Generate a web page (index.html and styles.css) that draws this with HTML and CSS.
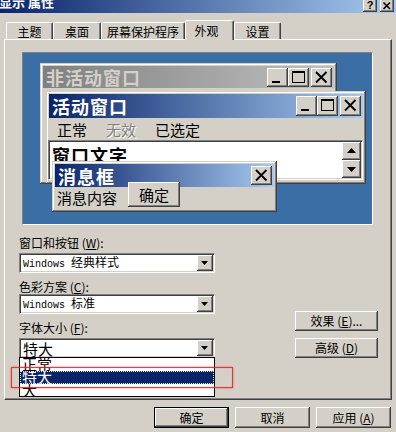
FILE: index.html
```html
<!DOCTYPE html>
<html lang="zh">
<head>
<meta charset="utf-8">
<link rel="stylesheet" href="styles.css">
</head>
<body>
<div class="dialog">
  <div class="titlebar">
    <span class="title-text">显示 属性</span>
    <div class="title-btns">
      <span class="tbtn">?</span>
      <span class="tbtn"><svg width="14" height="12" viewBox="0 0 14 12"><path d="M3.5 2.5 L10 9 M10 2.5 L3.5 9" stroke="#000" stroke-width="1.6"/></svg></span>
    </div>
  </div>

  <div class="tabs">
    <div class="tab t1">主题</div>
    <div class="tab t2">桌面</div>
    <div class="tab t3">屏幕保护程序</div>
    <div class="tab t4 sel">外观</div>
    <div class="tab t5">设置</div>
  </div>

  <div class="panel">
    <div class="preview">
      <div class="win inactive">
        <div class="wtitle">
          <span>非活动窗口</span>
          <div class="cbtns">
            <span class="cbtn"><svg width="21" height="19" viewBox="0 0 21 19"><rect x="5" y="13" width="8" height="2"/></svg></span>
            <span class="cbtn"><svg width="21" height="19" viewBox="0 0 21 19"><path fill-rule="evenodd" d="M4 3h13v12H4z M5 5h11v9H5z"/></svg></span>
            <span class="cbtn cx"><svg width="21" height="19" viewBox="0 0 21 19"><path d="M5 4 L15.5 14.5 M15.5 4 L5 14.5" stroke="#000" stroke-width="1.8"/></svg></span>
          </div>
        </div>
      </div>

      <div class="win active">
        <div class="wtitle">
          <span>活动窗口</span>
          <div class="cbtns">
            <span class="cbtn"><svg width="21" height="19" viewBox="0 0 21 19"><rect x="5" y="13" width="8" height="2"/></svg></span>
            <span class="cbtn"><svg width="21" height="19" viewBox="0 0 21 19"><path fill-rule="evenodd" d="M4 3h13v12H4z M5 5h11v9H5z"/></svg></span>
            <span class="cbtn cx"><svg width="21" height="19" viewBox="0 0 21 19"><path d="M5 4 L15.5 14.5 M15.5 4 L5 14.5" stroke="#000" stroke-width="1.8"/></svg></span>
          </div>
        </div>
        <div class="menu">
          <span>正常</span>
          <span class="disabled">无效</span>
          <span>已选定</span>
        </div>
        <div class="textarea">
          <span class="wtext">窗口文字</span>
          <div class="scroll">
            <span class="sbtn"><svg width="19" height="18" viewBox="0 0 19 18"><path d="M5 11h9l-4.5-5z"/></svg></span>
            <span class="sbtn"><svg width="19" height="18" viewBox="0 0 19 18"><path d="M5 7h9l-4.5 5z"/></svg></span>
          </div>
        </div>
      </div>

      <div class="win msg">
        <div class="wtitle">
          <span>消息框</span>
          <div class="cbtns">
            <span class="cbtn cx"><svg width="21" height="19" viewBox="0 0 21 19"><path d="M5 4 L15.5 14.5 M15.5 4 L5 14.5" stroke="#000" stroke-width="1.8"/></svg></span>
          </div>
        </div>
        <div class="msgbody">
          <span class="msgtext">消息内容</span>
          <span class="okbtn">确定</span>
        </div>
      </div>
    </div>

    <div class="lower">
      <div class="left-col">
        <div class="label l1">窗口和按钮 (<u>W</u>):</div>
        <div class="combo c1"><span class="ctext"><span class="lat">Windows </span>经典样式</span><span class="arrow"><svg width="16" height="16" viewBox="0 0 16 16"><path d="M4 6h7l-3.5 4z"/></svg></span></div>
        <div class="label l2">色彩方案 (<u>C</u>):</div>
        <div class="combo c2"><span class="ctext"><span class="lat">Windows </span>标准</span><span class="arrow"><svg width="16" height="16" viewBox="0 0 16 16"><path d="M4 6h7l-3.5 4z"/></svg></span></div>
        <div class="label l3">字体大小 (<u>F</u>):</div>
        <div class="combo c3">
          <span class="ctext big">特大</span><span class="arrow"><svg width="16" height="16" viewBox="0 0 16 16"><path d="M4 6h7l-3.5 4z"/></svg></span>
          <div class="droplist">
            <div class="item">正常</div>
            <div class="item selitem">特大</div>
            <div class="item">大</div>
          </div>
          <div class="redmark"></div>
        </div>
      </div>
      <div class="right-col">
        <span class="btn wide">效果 (<u>E</u>)...</span>
        <span class="btn wide">高级 (<u>D</u>)</span>
      </div>
    </div>
  </div>

  <div class="footer">
    <span class="btn foot default">确定</span>
    <span class="btn foot">取消</span>
    <span class="btn foot">应用 (<u>A</u>)</span>
  </div>
</div>
</body>
</html>
```

FILE: styles.css
```css
* { box-sizing: border-box; }
html, body { margin: 0; padding: 0; }
body {
  width: 396px;
  height: 432px;
  overflow: hidden;
  background: #d4d0c8;
  font-family: "Noto Sans CJK SC", "Liberation Sans", sans-serif;
  font-size: 12px;
  color: #000;
}
.dialog { width: 396px; height: 432px; }

/* title bar */
.titlebar {
  height: 13px;
  background: linear-gradient(to right, #0a246a, #a6caf0);
  display: flex;
  justify-content: space-between;
  align-items: flex-start;
  overflow: hidden;
}
.title-text {
  color: #fff;
  font-weight: bold;
  font-size: 13px;
  line-height: 13px;
  margin-top: -5px;
  margin-left: -1px;
  white-space: pre;
}
.title-btns { display: flex; gap: 3px; padding-right: 2px; }
.tbtn {
  width: 14px;
  height: 13px;
  background: #d4d0c8;
  box-shadow: inset -1px -1px #404040, inset 1px 1px #fff, inset -2px -2px #808080;
  display: flex;
  align-items: center;
  justify-content: center;
  font: bold 11px/1 "Liberation Sans", sans-serif;
  margin-top: -1px;
}

/* tabs */
.tabs {
  display: flex;
  align-items: flex-end;
  height: 19px;
  margin-top: 7px;
  padding-left: 6px;
}
.tab {
  height: 17px;
  background: #d4d0c8;
  border-top: 1px solid #fff;
  border-left: 1px solid #fff;
  border-right: 1px solid #404040;
  box-shadow: inset -1px 0 #808080;
  border-radius: 2px 2px 0 0;
  display: flex;
  align-items: center;
  justify-content: center;
  font-size: 12px;
  line-height: 1;
  padding-top: 1px;
}
.t1 { width: 47px; }
.t2 { width: 48px; }
.t3 { width: 84px; }
.t4 { width: 49px; }
.t5 { width: 47px; }
.tab.sel {
  height: 20px;
  margin-bottom: -1px;
  position: relative;
  z-index: 1;
  padding-top: 0;
  padding-right: 6px;
}

/* panel */
.panel {
  margin-left: 4px;
  width: 388px;
  height: 361px;
  border: 1px solid;
  border-color: #fff #404040 #404040 #fff;
  box-shadow: inset -1px -1px #808080;
}

/* preview */
.preview {
  position: relative;
  margin: 12px 0 0 17px;
  width: 351px;
  height: 173px;
  border: 1px solid;
  border-color: #808080 #fff #fff #808080;
  background: #3a6ea5;
}
.win {
  position: absolute;
  background: #d4d0c8;
  padding: 3px;
  box-shadow: inset -1px -1px #404040, inset 1px 1px #d4d0c8, inset -2px -2px #808080, inset 2px 2px #fff;
  display: flex;
  flex-direction: column;
}
.inactive { left: 17px; top: 10px; width: 297px; height: 121px; }
.active { left: 23px; top: 38px; width: 320px; height: 93px; }
.msg { left: 29px; top: 108px; width: 225px; height: 51px; }

.wtitle {
  display: flex;
  justify-content: space-between;
  align-items: center;
  padding: 0 2px 0 3px;
  font-weight: bold;
  font-size: 18px;
  letter-spacing: 1px;
  line-height: 1;
  color: #fff;
  background: linear-gradient(to right, #0a246a, #a6caf0);
  flex: none;
}
.inactive .wtitle {
  height: 22px;
  color: #d4d0c8;
  background: linear-gradient(to right, #808080, #c0c0c0);
}
.active .wtitle { height: 24px; }
.msg .wtitle { height: 23px; }

.cbtns { display: flex; }
.cbtn {
  width: 21px;
  height: 19px;
  background: #d4d0c8;
  box-shadow: inset -1px -1px #404040, inset 1px 1px #fff, inset -2px -2px #808080;
  display: block;
}
.cbtn svg { display: block; }
.cbtn.cx { margin-left: 2px; }
.active .cbtn { height: 20px; }

.menu {
  height: 22px;
  display: flex;
  align-items: center;
  gap: 19px;
  padding-left: 8px;
  font-size: 15px;
  line-height: 1;
}
.disabled { color: #808080; text-shadow: 1px 1px #fff; }

.textarea {
  height: 40px;
  margin-left: -1px;
  background: #fff;
  border: 1px solid;
  border-color: #808080 #fff #fff #808080;
  box-shadow: inset 1px 1px #404040, inset -1px -1px #d4d0c8;
  padding: 1px;
  display: flex;
  justify-content: space-between;
}
.wtext {
  font-weight: bold;
  font-size: 18px;
  line-height: 20px;
  padding: 3px 0 0 2px;
  letter-spacing: 1px;
}
.scroll { display: flex; flex-direction: column; }
.sbtn {
  width: 19px;
  height: 18px;
  background: #d4d0c8;
  box-shadow: inset -1px -1px #404040, inset 1px 1px #fff, inset -2px -2px #808080;
}
.sbtn svg { display: block; }

.msgbody { display: flex; align-items: flex-start; }
.msgtext {
  font-size: 15px;
  line-height: 22px;
  padding-left: 2px;
}
.okbtn {
  width: 52px;
  height: 25px;
  margin: -5px 0 0 11px;
  background: #d4d0c8;
  box-shadow: inset -1px -1px #404040, inset 1px 1px #fff, inset -2px -2px #808080;
  display: flex;
  align-items: center;
  justify-content: center;
  font-size: 15px;
  line-height: 1;
}

/* lower controls */
.lower {
  display: flex;
  justify-content: space-between;
  align-items: flex-end;
  padding: 0 13px 0 14px;
}
.left-col { width: 196px; display: flex; flex-direction: column; }
.label { height: 14px; line-height: 14px; font-size: 12px; }
.l1 { margin-top: 11px; }
.l2, .l3 { margin-top: 7px; }
.combo {
  height: 20px;
  background: #fff;
  border: 1px solid;
  border-color: #808080 #fff #fff #808080;
  box-shadow: inset 1px 1px #404040, inset -1px -1px #d4d0c8;
  padding: 1px;
  display: flex;
  justify-content: space-between;
  align-items: center;
}
.c1, .c3 { margin-top: 3px; }
.c2 { margin-top: 0; }
.c3 { position: relative; }
.ctext { padding-left: 2px; font-size: 12px; line-height: 1; white-space: pre; }
.ctext.big { font-size: 15px; }
.lat { font-family: "Liberation Mono", monospace; font-size: 10px; }
.arrow {
  width: 16px;
  height: 16px;
  background: #d4d0c8;
  box-shadow: inset -1px -1px #404040, inset 1px 1px #fff, inset -2px -2px #808080;
}
.arrow svg { display: block; }

.droplist {
  position: absolute;
  left: -1px;
  top: 18px;
  width: 196px;
  height: 40px;
  background: #fff;
  border: 1px solid #000;
  z-index: 2;
}
.item {
  height: 13px;
  line-height: 12px;
  font-size: 15px;
  padding-left: 2px;
  overflow: hidden;
}
.selitem {
  background: #0a246a;
  color: #fff;
  outline: 1px dotted #e8e8c8;
  outline-offset: -1px;
}
.redmark {
  position: absolute;
  left: -9px;
  top: 28px;
  width: 222px;
  height: 21px;
  border: 1px solid rgba(225, 40, 40, 0.9);
  box-shadow: 0 0 2px rgba(225, 60, 60, 0.7), inset 0 0 1px rgba(225, 60, 60, 0.6);
  z-index: 3;
}

.right-col { display: flex; flex-direction: column; gap: 7px; }
.btn {
  height: 20px;
  background: #d4d0c8;
  box-shadow: inset -1px -1px #404040, inset 1px 1px #fff, inset -2px -2px #808080;
  display: flex;
  align-items: center;
  justify-content: center;
  font-size: 12px;
  line-height: 1;
  white-space: pre;
}
.btn.wide { width: 83px; }

.footer {
  display: flex;
  justify-content: flex-end;
  gap: 6px;
  margin-top: 7px;
  padding-right: 5px;
}
.btn.foot { width: 75px; height: 21px; }
.btn.default {
  border: 1px solid #000;
  box-shadow: inset -1px -1px #404040, inset 1px 1px #fff, inset -2px -2px #808080;
}
u { text-decoration: underline; text-underline-offset: 1px; }
```
